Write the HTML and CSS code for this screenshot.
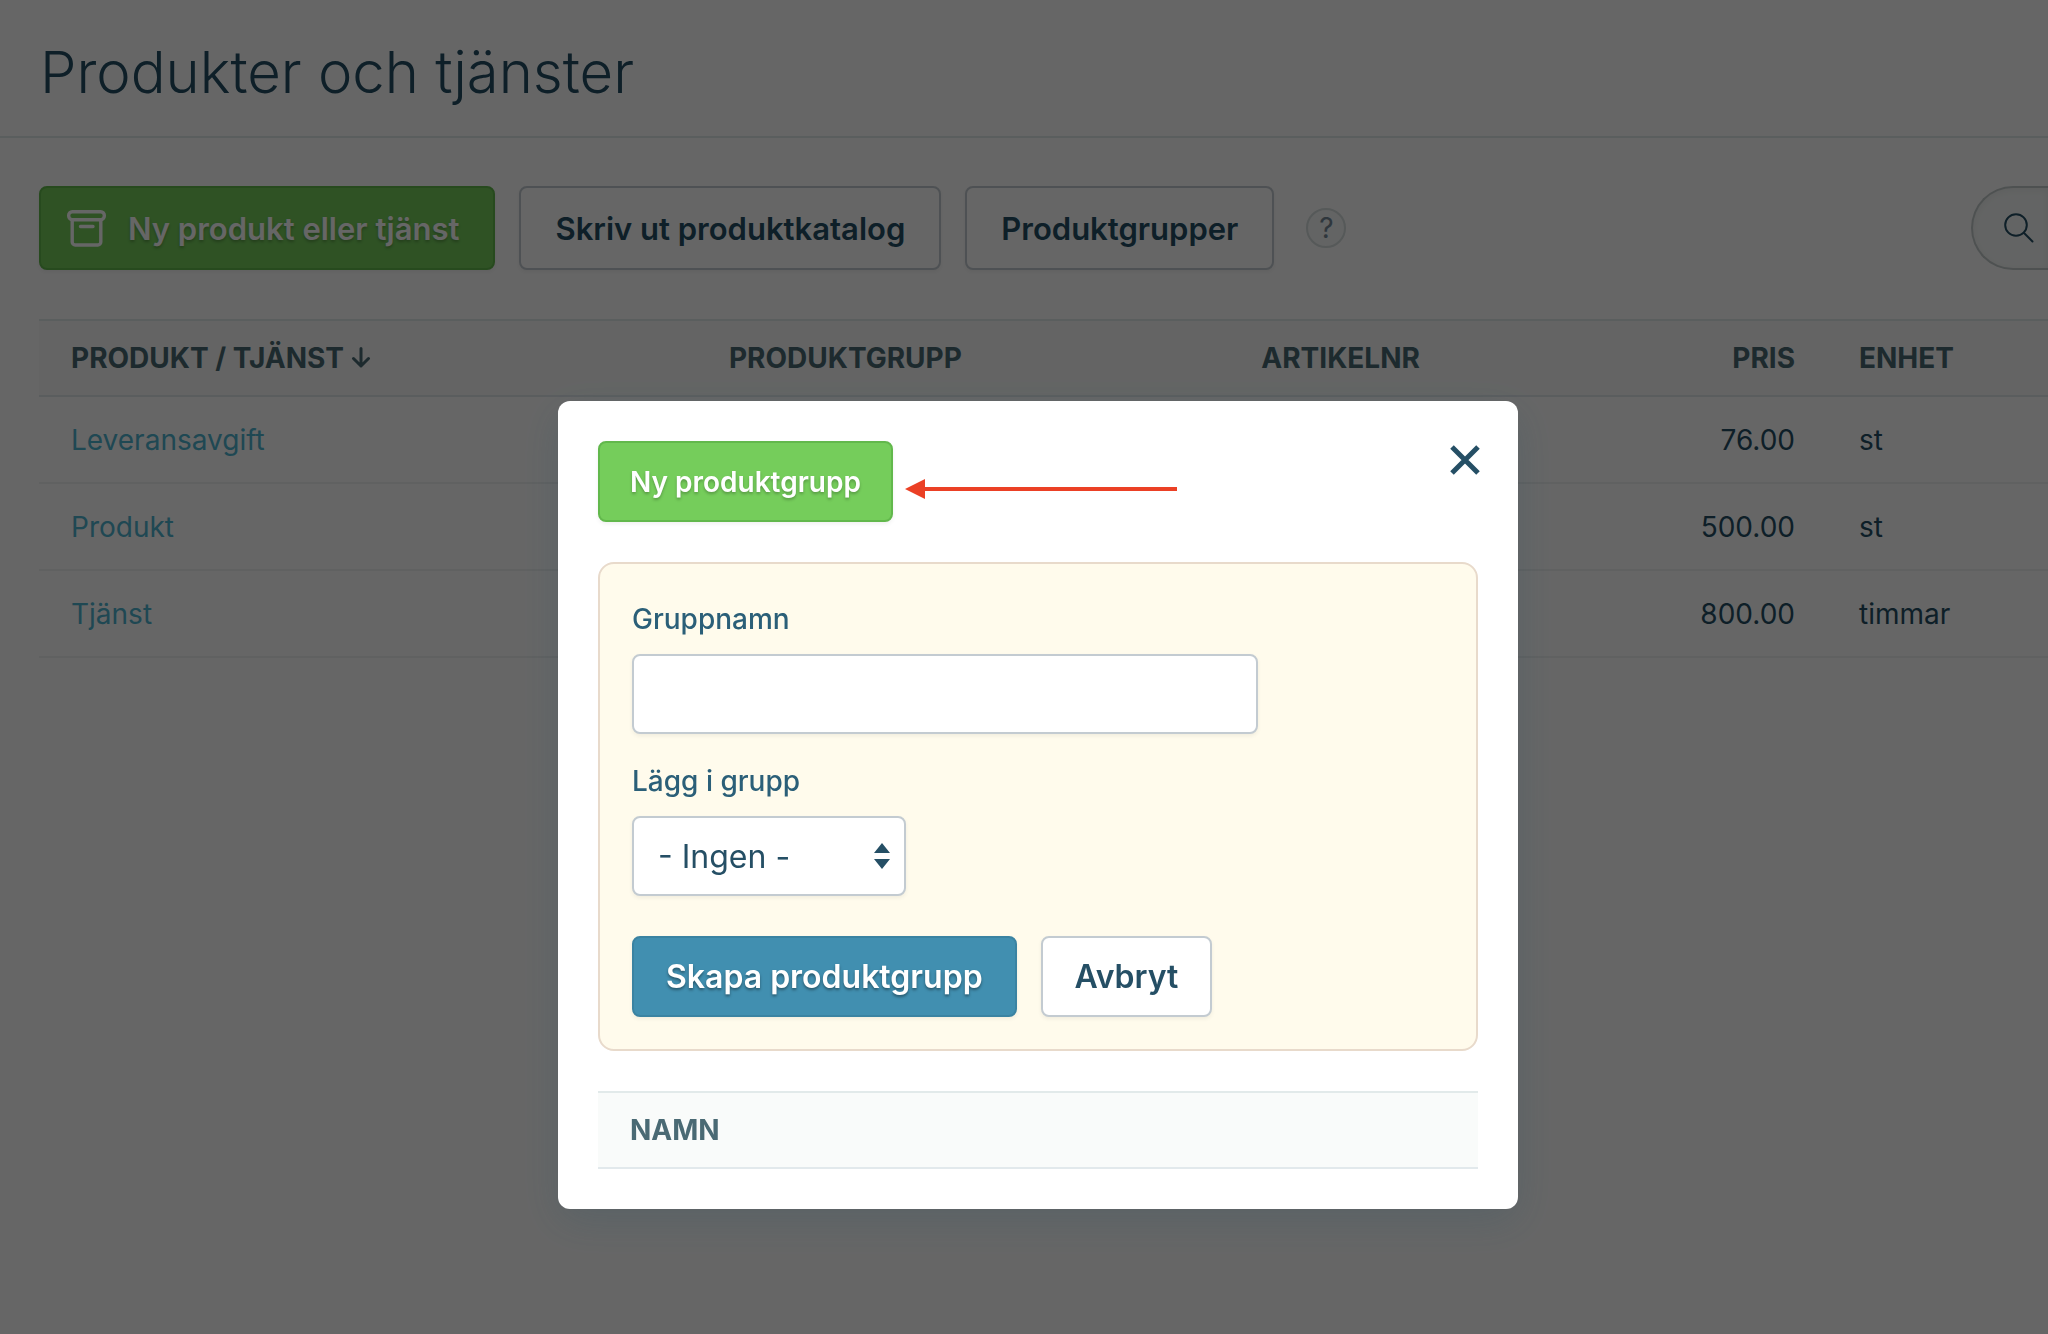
FILE: index.html
```html
<!DOCTYPE html>
<html lang="sv">
<head>
  <meta charset="UTF-8">
  <meta name="viewport" content="width=device-width, initial-scale=1.0">
  <title>Produkter och tjänster</title>
  <link rel="stylesheet" href="styles.css">
</head>
<body>
  <header class="page-header">
    <h1>Produkter och tjänster</h1>
  </header>

  <main class="page">
    <!-- Verktygsrad -->
    <div class="toolbar">
      <button type="button" class="btn btn-green btn-icon">
        <svg class="icon-box" width="39" height="37" viewBox="0 0 39 37" fill="none" stroke="currentColor" stroke-width="3.4" stroke-linecap="round" stroke-linejoin="round">
          <rect x="1.7" y="1.7" width="35.6" height="8" rx="3.6"/>
          <path d="M5.200 9.700V32a3 3 0 0 0 3 3h22.600a3 3 0 0 0 3-3V9.700M13.500 16.500h12.500"/>
        </svg>
        Ny produkt eller tjänst
      </button>
      <button type="button" class="btn">Skriv ut produktkatalog</button>
      <button type="button" class="btn">Produktgrupper</button>
      <button type="button" class="help" aria-label="Hjälp">?</button>
      <label class="search">
        <svg width="30" height="30" viewBox="0 0 30 30" fill="none" stroke="currentColor" stroke-width="2" stroke-linecap="round">
          <circle cx="12" cy="12" r="10.800"/>
          <path d="M19.800 19.800L28.500 28.500"/>
        </svg>
        <input type="search" aria-label="Sök">
      </label>
    </div>

    <table class="list products">
      <thead>
        <tr>
          <th class="col-name">Produkt / tjänst
            <svg width="20" height="22" viewBox="0 0 20 22" fill="none" stroke="currentColor" stroke-width="3" stroke-linecap="round" stroke-linejoin="round">
              <path d="M10 2.500V20M2.500 12.500L10 20l7.500-7.500"/>
            </svg>
          </th>
          <th class="col-group">Produktgrupp</th>
          <th class="col-number">Artikelnr</th>
          <th class="col-price">Pris</th>
          <th>Enhet</th>
        </tr>
      </thead>
      <tbody>
        <tr>
          <td><a href="#">Leveransavgift</a></td>
          <td></td>
          <td></td>
          <td class="col-price">76.00</td>
          <td>st</td>
        </tr>
        <tr>
          <td><a href="#">Produkt</a></td>
          <td></td>
          <td></td>
          <td class="col-price">500.00</td>
          <td>st</td>
        </tr>
        <tr>
          <td><a href="#">Tjänst</a></td>
          <td></td>
          <td></td>
          <td class="col-price">800.00</td>
          <td>timmar</td>
        </tr>
      </tbody>
    </table>
  </main>

  <!-- Dialog för produktgrupper -->
  <div class="overlay">
    <div class="modal" role="dialog" aria-label="Produktgrupper">
      <div class="modal-top">
        <button type="button" class="btn btn-green btn-small">Ny produktgrupp</button>
        <svg class="pointer" width="272" height="20" viewBox="0 0 272 20" fill="#eb4025">
          <path d="M0 10L20 0V8H272V12H20V20Z"/>
        </svg>
        <button type="button" class="close" aria-label="Stäng">
          <svg width="30" height="30" viewBox="0 0 30 30" fill="none" stroke="currentColor" stroke-width="5">
            <path d="M2 2L28 28M28 2L2 28"/>
          </svg>
        </button>
      </div>

      <form class="group-form">
        <label for="gruppnamn">Gruppnamn</label>
        <input type="text" id="gruppnamn" name="gruppnamn">
        <label for="grupp">Lägg i grupp</label>
        <div class="select">
          <select id="grupp" name="grupp">
            <option value="">- Ingen -</option>
          </select>
          <svg width="16" height="26" viewBox="0 0 16 26" fill="currentColor">
            <path d="M8 0L16 10H0ZM8 26L0 16H16Z"/>
          </svg>
        </div>
        <div class="form-buttons">
          <button type="submit" class="btn btn-blue">Skapa produktgrupp</button>
          <button type="button" class="btn">Avbryt</button>
        </div>
      </form>

      <table class="list">
        <thead>
          <tr><th>Namn</th></tr>
        </thead>
      </table>
    </div>
  </div>
</body>
</html>
```
FILE: styles.css
```css
* {
  box-sizing: border-box;
}
body {
  margin: 0;
  min-height: 100vh;
  overflow: hidden;
  font-family: Inter, "Liberation Sans", sans-serif;
  font-size: 28px;
  color: #254f65;
  background-color: #fff;
}
button, input, select {
  font-family: inherit;
  color: inherit;
}
.page-header {
  padding: 36px 40px 28px;
  border-bottom: 2px solid #e2eaea;
}
h1 {
  margin: 0;
  font-size: 58px;
  font-weight: 300;
  line-height: 72px;
}
.page {
  padding: 48px 0 0 39px;
}

/* Knappar */
.btn {
  height: 84px;
  padding: 0 32px;
  border: 2px solid #c3cbd1;
  border-radius: 8px;
  background-color: #fff;
  font-size: 32px;
  font-weight: 600;
  white-space: nowrap;
  box-shadow: 0 2px 4px rgba(0, 0, 0, 0.06);
}
.btn-green {
  background-color: #75cd5b;
  border-color: #62b84c;
  color: #fff;
  text-shadow: 0 2px 3px rgba(0, 0, 0, 0.25);
}
.btn-blue {
  background-color: #418fb0;
  border-color: #3a83a2;
  color: #fff;
  text-shadow: 0 2px 3px rgba(0, 0, 0, 0.4);
}
.btn-small {
  padding: 0 30px;
  font-size: 28px;
}

/* Verktygsrad */
.toolbar {
  display: flex;
  align-items: center;
  gap: 24px;
}
.toolbar .btn {
  padding: 0 34px;
  font-size: 31px;
}
.toolbar .btn-icon {
  display: flex;
  align-items: center;
  gap: 22px;
  padding-left: 26px;
}
.help {
  width: 40px;
  height: 40px;
  margin-left: 8px;
  padding: 0;
  border: 2px solid #d6dede;
  border-radius: 50%;
  background-color: #f7f9f9;
  color: #768a98;
  font-size: 28px;
  line-height: 36px;
}
.search {
  display: flex;
  align-items: center;
  width: 77px;
  height: 84px;
  margin-left: auto;
  padding-left: 31px;
  border: 2px solid #c3cbcb;
  border-right: none;
  border-radius: 42px 0 0 42px;
  background-color: #f8fbfa;
  box-shadow: inset 0 2px 8px rgba(0, 0, 0, 0.06);
}
.search svg {
  flex: none;
}
.search input {
  min-width: 0;
  width: 100%;
  padding: 0;
  border: none;
  background: none;
}

/* Listor */
.list {
  width: 100%;
  border-collapse: separate;
  border-spacing: 0;
  table-layout: fixed;
}
.list th {
  height: 78px;
  padding: 0 32px;
  border-top: 2px solid #e2eaea;
  border-bottom: 2px solid #e2e9ec;
  background-color: #f9fbfa;
  color: #4a6a74;
  font-weight: 700;
  text-align: left;
  text-transform: uppercase;
}
.list td {
  height: 87px;
  padding: 0 32px;
  border-bottom: 2px solid #eff2f2;
}
.list a {
  color: #4fb3d0;
  text-decoration: none;
}
.products {
  margin-top: 49px;
}
.col-name {
  width: 32.75%;
}
.col-group {
  width: 26.5%;
}
.col-number {
  width: 20%;
}
.col-price {
  width: 9.75%;
}
.list .col-price {
  text-align: right;
}

/* Dialog */
.overlay {
  position: fixed;
  inset: 0;
  display: flex;
  justify-content: center;
  align-items: flex-start;
  padding: 401px 0 0 28px;
  background-color: rgba(0, 0, 0, 0.6);
}
.modal {
  width: 960px;
  padding: 40px;
  border-radius: 12px;
  background-color: #fff;
  box-shadow: 0 12px 40px rgba(37, 79, 101, 0.2);
}
.modal .btn {
  height: 81px;
}
.modal-top {
  display: flex;
  align-items: center;
  gap: 12px;
  margin-bottom: 40px;
}
.pointer {
  margin-top: 14px;
}
.close {
  align-self: flex-start;
  height: 30px;
  margin: 4px -2px 0 auto;
  padding: 0;
  border: none;
  background: none;
  cursor: pointer;
}
.close svg {
  display: block;
}
.group-form {
  margin-bottom: 40px;
  padding: 32px;
  border: 2px solid #e8dacb;
  border-radius: 16px;
  background-color: #fffbec;
}
.group-form label {
  display: block;
  margin-bottom: 12px;
  color: #2b5f78;
  font-weight: 500;
  line-height: 46px;
}
.group-form input,
.group-form select {
  display: block;
  height: 80px;
  border: 2px solid #c3cbd1;
  border-radius: 8px;
  background-color: #fff;
  font-size: 32px;
  box-shadow: 0 2px 4px rgba(0, 0, 0, 0.06);
}
.group-form input {
  width: 626px;
  margin-bottom: 24px;
  padding: 0 24px;
}
.select {
  position: relative;
  width: 274px;
  margin-bottom: 40px;
}
.group-form select {
  width: 100%;
  padding: 0 48px 0 24px;
  appearance: none;
}
.select svg {
  position: absolute;
  top: 27px;
  right: 16px;
  pointer-events: none;
}
.form-buttons {
  display: flex;
  gap: 24px;
}
```
